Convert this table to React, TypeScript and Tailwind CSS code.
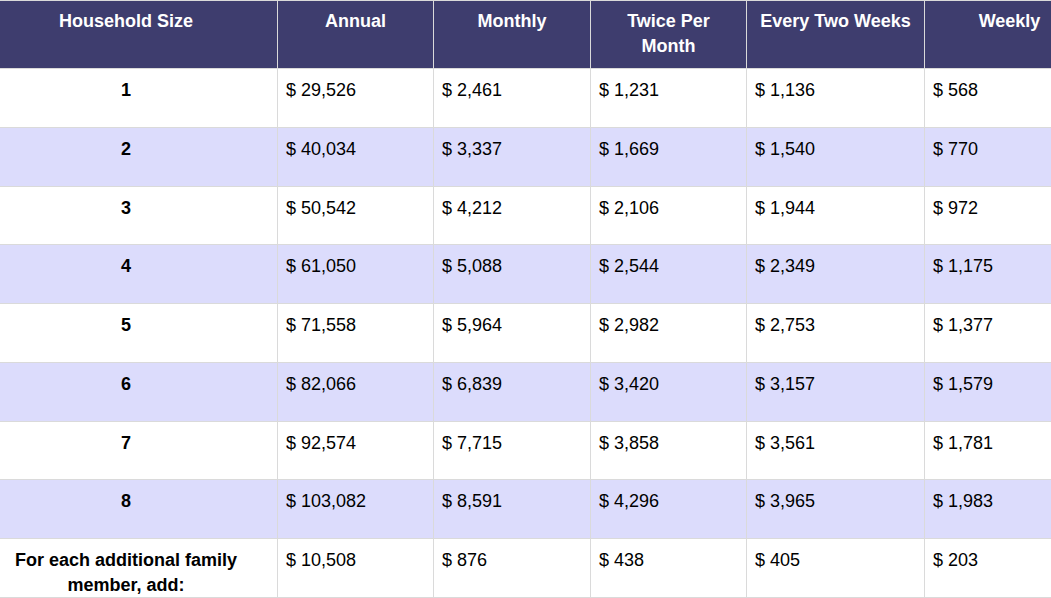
import React from 'react';

const columns = ['Household Size', 'Annual', 'Monthly', 'Twice Per Month', 'Every Two Weeks', 'Weekly'];

// column widths, in order
const widths = ['w-[301px]', 'w-[156px]', 'w-[157px]', 'w-[156px]', 'w-[178px]', 'w-[170px]'];

const rows: string[][] = [
  ['1', '29,526', '2,461', '1,231', '1,136', '568'],
  ['2', '40,034', '3,337', '1,669', '1,540', '770'],
  ['3', '50,542', '4,212', '2,106', '1,944', '972'],
  ['4', '61,050', '5,088', '2,544', '2,349', '1,175'],
  ['5', '71,558', '5,964', '2,982', '2,753', '1,377'],
  ['6', '82,066', '6,839', '3,420', '3,157', '1,579'],
  ['7', '92,574', '7,715', '3,858', '3,561', '1,781'],
  ['8', '103,082', '8,591', '4,296', '3,965', '1,983'],
  ['For each additional family member, add:', '10,508', '876', '438', '405', '203'],
];

export default function App() {
  return (
    <div
      className="w-full h-[598px] overflow-hidden bg-white text-[18px] leading-[25px] text-black"
      style={{ fontFamily: '"Liberation Sans", Arial, sans-serif' }}
    >
      <div className="-ml-[23px] w-[1118px] flex flex-col">
        {/* Header */}
        <div className="flex h-[69px] bg-[#3e3d6e] border-t border-b border-[#dadada]">
          {columns.map((col, i) => (
            <div
              key={col}
              className={`${widths[i]} shrink-0 pt-[8px] text-center font-bold text-white border-r border-[#dadada] ${
                i === 0 ? 'pl-[29px] pr-[31px]' : i === 3 ? 'px-[28px]' : 'px-[6px]'
              }`}
            >
              {col}
            </div>
          ))}
        </div>

        {/* Body */}
        {rows.map((row, r) => (
          <div
            key={r}
            className={`flex shrink-0 h-[58.75px] border-b border-[#dadada] ${
              r % 2 === 1 ? 'bg-[#dcdcfc]' : 'bg-white'
            }`}
          >
            {row.map((cell, i) => (
              <div
                key={i}
                className={`${widths[i]} shrink-0 pt-[9px] border-r border-[#dadada] ${
                  i === 0 ? 'text-center font-bold pl-[29px] pr-[31px]' : 'pl-[8px]'
                }`}
              >
                {i === 0 ? cell : `$ ${cell}`}
              </div>
            ))}
          </div>
        ))}
      </div>
    </div>
  );
}
